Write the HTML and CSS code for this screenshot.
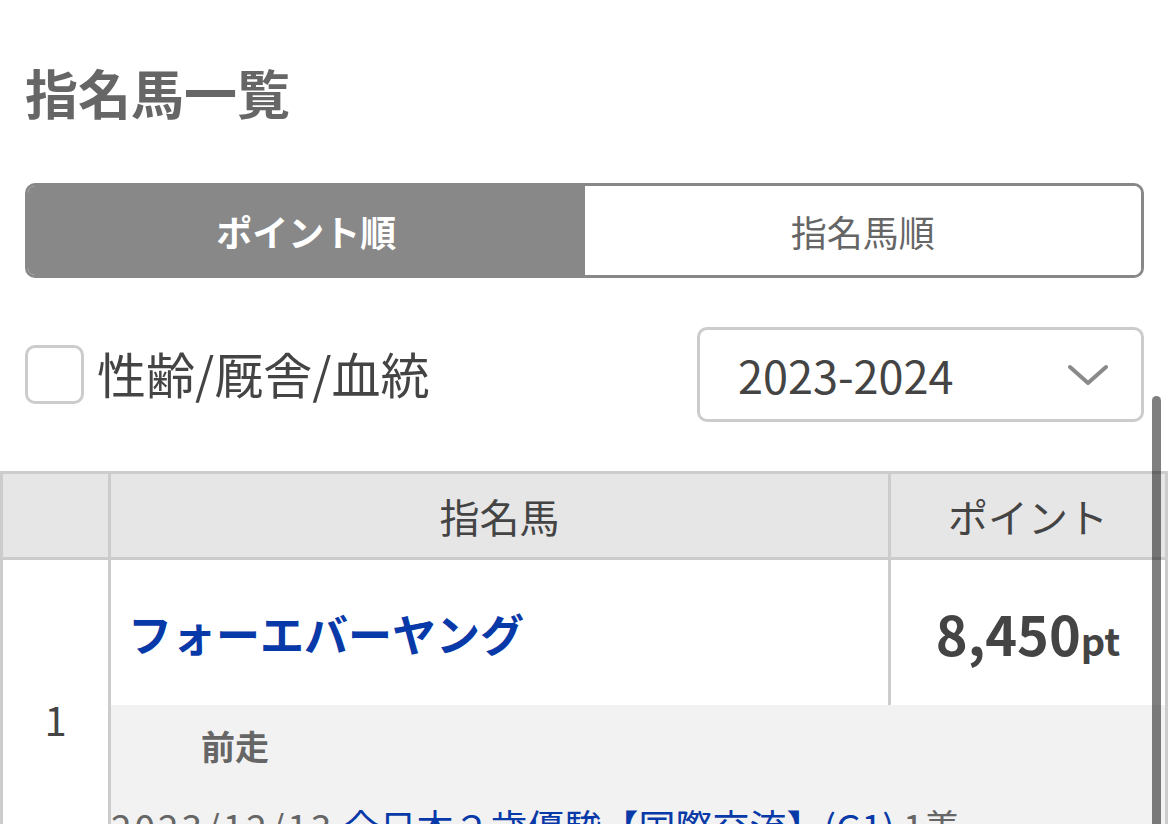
FILE: index.html
```html
<!DOCTYPE html>
<html lang="ja">
<head>
  <meta charset="UTF-8" />
  <meta name="viewport" content="width=device-width, initial-scale=1.0"/>
  <title>指名馬一覧</title>
  <link rel="stylesheet" href="styles.css">
</head>
<body>

  <div class="page-head">
    <h1 class="title">指名馬一覧</h1>

    <div class="tabs">
      <button class="tab active">ポイント順</button>
      <button class="tab">指名馬順</button>
    </div>

    <div class="controls">
      <label class="check">
        <span class="check-box"></span>
        <span class="check-text">性齢/厩舎/血統</span>
      </label>
      <div class="season">
        <span>2023-2024</span>
        <svg class="chevron" width="40" height="22" viewBox="0 0 40 22">
          <polyline points="2,3 20,19 38,3" fill="none" stroke="#8a8a8a" stroke-width="4" stroke-linecap="round" stroke-linejoin="round"/>
        </svg>
      </div>
    </div>
  </div>

  <table class="horses">
    <colgroup>
      <col class="col-rank">
      <col class="col-name">
      <col class="col-point">
    </colgroup>
    <thead>
      <tr>
        <th></th>
        <th>指名馬</th>
        <th>ポイント</th>
      </tr>
    </thead>
    <tbody>
      <tr class="main-row">
        <td class="rank" rowspan="2">1</td>
        <td class="name"><a href="#">フォーエバーヤング</a></td>
        <td class="point">8,450<small>pt</small></td>
      </tr>
      <tr class="sub-row">
        <td colspan="2">
          <div class="prev-label">前走</div>
          <div class="prev-race">
            <span class="date">2023/12/13</span>
            <a href="#">全日本２歳優駿【国際交流】(G1)</a>
            <span class="result">1着</span>
          </div>
        </td>
      </tr>
    </tbody>
  </table>

  <div class="scrollbar"></div>

</body>
</html>
```

FILE: styles.css
```css
html, body {
  overflow: hidden;
}

body {
  margin: 0;
  font-family: "Noto Sans CJK JP", "Noto Sans", sans-serif;
  color: #444;
  background: #fff;
}

a {
  color: #0839a8;
  text-decoration: none;
}

.page-head {
  padding: 60px 26px 0 25px;
}

.title {
  margin: 0;
  font-size: 53px;
  line-height: 64px;
  font-weight: bold;
  color: #666;
}

.tabs {
  display: flex;
  margin-top: 59px;
  height: 95px;
  border: 3px solid #888;
  border-radius: 10px;
  overflow: hidden;
  box-sizing: border-box;
}

.tab {
  flex: 1;
  border: none;
  background: #fff;
  color: #666;
  font-family: inherit;
  font-size: 36px;
  padding: 0;
}

.tab.active {
  background: #888;
  color: #fff;
  font-weight: bold;
}

.controls {
  display: flex;
  justify-content: space-between;
  align-items: center;
  margin-top: 49px;
}

.check {
  display: flex;
  align-items: center;
  gap: 13px;
}

.check-box {
  width: 59px;
  height: 59px;
  border: 3px solid #ccc;
  border-radius: 10px;
  box-sizing: border-box;
}

.check-text {
  font-size: 49px;
  color: #444;
  margin-top: -4px;
}

.season {
  display: flex;
  align-items: center;
  justify-content: space-between;
  width: 447px;
  height: 95px;
  border: 3px solid #ccc;
  border-radius: 10px;
  box-sizing: border-box;
  padding: 0 33px 0 38px;
  font-size: 45px;
  color: #444;
}

.chevron {
  display: block;
}

.horses {
  width: 1168px;
  margin-top: 49px;
  border-collapse: collapse;
  table-layout: fixed;
}

.col-rank {
  width: 108px;
}

.col-name {
  width: 780px;
}

.horses th,
.horses td {
  border: 3px solid #ccc;
  padding: 0;
}

.horses th {
  height: 83px;
  background: #e6e6e6;
  font-size: 40px;
  font-weight: normal;
  color: #444;
}

.main-row td {
  height: 145px;
  border-bottom: none;
}

.rank {
  text-align: center;
  font-size: 40px;
  color: #444;
}

.name {
  padding-left: 17px !important;
  font-size: 44px;
  font-weight: bold;
}

.point {
  text-align: center;
  font-size: 54px;
  font-weight: bold;
  color: #444;
}

.point small {
  font-size: 38px;
}

.sub-row td {
  background: #f2f2f2;
  border-top: none;
  padding: 20px 0 27px 0;
}

.prev-label {
  padding-left: 90px;
  font-size: 34px;
  line-height: 41px;
  font-weight: bold;
  color: #666;
}

.prev-race {
  margin-top: 38px;
  font-size: 37px;
  line-height: 45px;
  color: #666;
  white-space: nowrap;
}

.prev-race .date {
  letter-spacing: 3px;
}

.scrollbar {
  position: fixed;
  top: 396px;
  right: 9px;
  width: 9px;
  height: 500px;
  border-radius: 5px;
  background: rgba(0, 0, 0, 0.5);
}
```
